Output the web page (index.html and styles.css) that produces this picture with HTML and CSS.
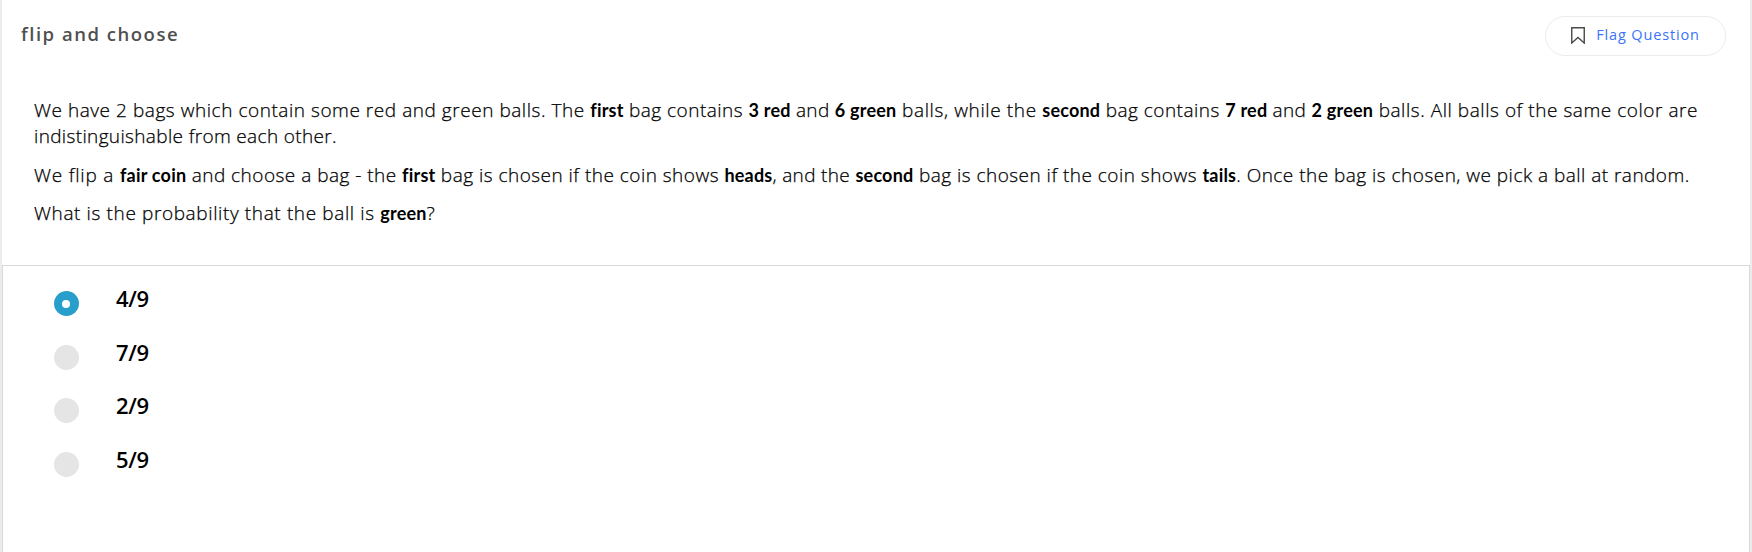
FILE: index.html
```html
<!DOCTYPE html>
<html lang="en">
<head>
<meta charset="utf-8">
<title>flip and choose</title>
<link rel="stylesheet" href="styles.css">
</head>
<body>
<main class="question">
<header class="question-header">
<h1 class="title">flip and choose</h1>
<button class="flag" type="button"><svg class="flag-icon" viewBox="0 0 14 17" aria-hidden="true"><path d="M.75 .75h12.5v15.25L7 10.5.75 16z"/></svg><span class="flag-label">Flag Question</span></button>
</header>
<section class="prompt">
<p><span class="wide">We have 2 bags which contain some red and green balls. The </span><strong>first</strong> bag contains <strong>3 red</strong><span class="tight"> and </span><strong>6 green</strong><span class="wider"> balls, while the </span><strong>second</strong> bag contains <strong>7 red</strong><span class="tight"> and </span><strong>2 green</strong><span class="wide"> balls. All balls of the same color are</span><br><span class="tight">indistinguishable from each other.</span></p>
<p><span class="widest">We flip a </span><strong>fair coin</strong> and choose a bag - the <strong>first</strong> bag is chosen if the coin shows <strong>heads</strong><span class="tight">, and the </span><strong>second</strong> bag is chosen if the coin shows <strong>tails</strong>. Once the bag is chosen, we pick a ball at random.</p>
<p><span class="wider">What is the probability that the ball is </span><strong>green</strong>?</p>
</section>
<section class="answers">
<div class="answer"><span class="radio selected"></span><span class="answer-text">4/9</span></div>
<div class="answer"><span class="radio"></span><span class="answer-text">7/9</span></div>
<div class="answer"><span class="radio"></span><span class="answer-text">2/9</span></div>
<div class="answer"><span class="radio"></span><span class="answer-text">5/9</span></div>
</section>
</main>
</body>
</html>
```
FILE: styles.css
```css
* { box-sizing: border-box; }
body { margin: 0; background: #fff; font-family: "Open Sans", sans-serif; overflow: hidden; }
.question { height: 552px; border: solid #ececec; border-width: 0 2px; display: flex; flex-direction: column; }
.question-header { height: 71px; padding: 16px 24px 0 19px; display: flex; justify-content: space-between; align-items: flex-start; }
.title { margin: 4px 0 0; font-size: 18.5px; line-height: 28px; font-weight: 600; letter-spacing: 1.52px; color: #505050; }
.flag { width: 181px; height: 40px; padding: 0 0 1px; border: 1px solid #ececec; border-radius: 20px; background: #fff; display: flex; align-items: center; justify-content: center; gap: 11px; }
.flag-icon { width: 14px; height: 17px; fill: none; stroke: #4a4a4a; stroke-width: 1.4; }
.flag-label { margin-top: -1px; font: 400 14.5px/20px "Open Sans", sans-serif; letter-spacing: .85px; color: #3b74f7; }
.prompt { height: 194px; padding: 26px 32px 0; color: #000; font-size: 19px; line-height: 26px; font-weight: 300; letter-spacing: .475px; white-space: nowrap; -webkit-text-stroke: .25px #000; }
.prompt p { margin: 0 0 12.5px; }
.prompt strong { font: 700 18px/20px Lato, sans-serif; letter-spacing: .21px; -webkit-text-stroke: 0; }
.tight { letter-spacing: .35px; }
.wide { letter-spacing: .545px; }
.wider { letter-spacing: .62px; }
.widest { letter-spacing: .81px; }
.answers { flex: 1; padding: 20px 51px 0; border: solid #d9d9d9; border-width: 1px 1px 0; }
.answer { height: 53.6px; display: flex; align-items: flex-start; gap: 37px; }
.radio { width: 25px; height: 25px; margin-top: 5px; border-radius: 50%; background: #e5e5e5; display: grid; place-items: center; }
.selected { background: #289fca; }
.selected::after { content: ""; width: 8px; height: 8px; margin-right: 1px; border-radius: 50%; background: #fff; }
.answer-text { margin-top: -2px; font-size: 22px; line-height: 28px; font-weight: 600; letter-spacing: -.3px; color: #000; }
```
